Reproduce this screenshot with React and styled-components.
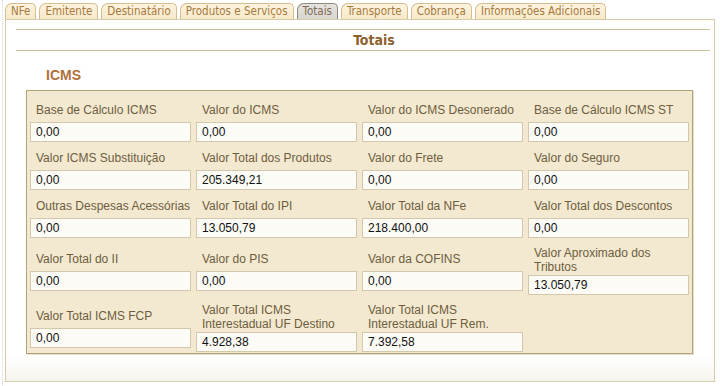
import styled, { createGlobalStyle } from "styled-components";

const Global = createGlobalStyle`
  html, body {
    margin: 0;
    padding: 0;
    background: #ffffff;
  }
`;

const Page = styled.div`
  width: 719px;
  height: 386px;
  padding: 3px 0 0 2px;
  box-sizing: border-box;
  border-left: 1px dotted #d6d6d6;
  margin-left: 2px;
`;

const TabStrip = styled.div`
  display: flex;
  gap: 3px;
  height: 16px;
  position: relative;
  z-index: 1;
`;

const Tab = styled.div`
  height: 16px;
  box-sizing: border-box;
  padding: 0 5px;
  font-family: "DejaVu Sans Condensed", "DejaVu Sans", sans-serif;
  font-size: 11.5px;
  line-height: 15px;
  color: ${(p) => (p.$active ? "#7d6c58" : "#a87a3e")};
  background: ${(p) => (p.$active ? "linear-gradient(#e6e3dd, #d9d6cf)" : "linear-gradient(#fdf4e0, #f7e8c8)")};
  border: 1px solid ${(p) => (p.$active ? "#8e8a80" : "#d9bd8c")};
  border-bottom: none;
  border-radius: 7px 5px 0 0;
  white-space: nowrap;
`;

const Panel = styled.div`
  width: 710px;
  height: 363px;
  box-sizing: border-box;
  border: 1px solid #d6ccab;
  background: linear-gradient(#ffffff 0, #ffffff 335px, #f6f4ee 362px);
  padding-top: 9px;
`;

const Header = styled.div`
  margin: 0 4px 0 10px;
  height: 22px;
  border-top: 1px solid #cdbf99;
  border-bottom: 1px solid #cdbf99;
  box-sizing: border-box;
  display: flex;
  align-items: center;
  justify-content: center;
  padding-left: 22px;
  font-family: "DejaVu Sans Condensed", "DejaVu Sans", sans-serif;
  font-weight: bold;
  font-size: 14px;
  color: #8e5f2e;
`;

const SectionTitle = styled.div`
  margin: 16px 0 0 40px;
  height: 17px;
  line-height: 17px;
  font-family: "Liberation Sans", Arial, sans-serif;
  font-weight: bold;
  font-size: 14px;
  color: #b0713a;
`;

const Box = styled.div`
  margin: 6px 0 0 20px;
  width: 667px;
  box-sizing: border-box;
  background: #f3e9d1;
  border: 1px solid #b2a27c;
  box-shadow: 1px 1px 0 #e8dfc6;
  padding: 12px 2px 1px 3px;
  display: grid;
  grid-template-columns: repeat(4, 161px);
  column-gap: 5px;
  row-gap: 9px;
  align-items: center;
`;

const Cell = styled.div`
  display: flex;
  flex-direction: column;
`;

const Label = styled.div`
  padding-left: 6px;
  font-family: "Liberation Sans", Arial, sans-serif;
  font-size: 12px;
  line-height: ${(p) => (p.$wrap ? "13.5px" : "14px")};
  margin-bottom: ${(p) => (p.$wrap ? "1px" : "5px")};
  color: #6e5d3d;
  white-space: ${(p) => (p.$wrap ? "normal" : "nowrap")};
  padding-right: ${(p) => (p.$wrap ? "10px" : "0")};
`;

const Field = styled.div`
  height: 20px;
  box-sizing: border-box;
  border: 1px solid #d3c8aa;
  background: #fcfbf6;
  padding-left: 5px;
  font-family: "Liberation Sans", Arial, sans-serif;
  font-size: 12px;
  line-height: 18px;
  color: #111;
`;

const tabs = [
  "NFe",
  "Emitente",
  "Destinatário",
  "Produtos e Serviços",
  "Totais",
  "Transporte",
  "Cobrança",
  "Informações Adicionais",
];

const fields = [
  ["Base de Cálculo ICMS", "0,00"],
  ["Valor do ICMS", "0,00"],
  ["Valor do ICMS Desonerado", "0,00"],
  ["Base de Cálculo ICMS ST", "0,00"],
  ["Valor ICMS Substituição", "0,00"],
  ["Valor Total dos Produtos", "205.349,21"],
  ["Valor do Frete", "0,00"],
  ["Valor do Seguro", "0,00"],
  ["Outras Despesas Acessórias", "0,00"],
  ["Valor Total do IPI", "13.050,79"],
  ["Valor Total da NFe", "218.400,00"],
  ["Valor Total dos Descontos", "0,00"],
  ["Valor Total do II", "0,00"],
  ["Valor do PIS", "0,00"],
  ["Valor da COFINS", "0,00"],
  ["Valor Aproximado dos Tributos", "13.050,79", true],
  ["Valor Total ICMS FCP", "0,00"],
  ["Valor Total ICMS Interestadual UF Destino", "4.928,38", true],
  ["Valor Total ICMS Interestadual UF Rem.", "7.392,58", true],
];

export default function App() {
  return (
    <Page>
      <Global />
      <TabStrip>
        {tabs.map((t) => (
          <Tab key={t} $active={t === "Totais"}>{t}</Tab>
        ))}
      </TabStrip>
      <Panel>
        <Header>Totais</Header>
        <SectionTitle>ICMS</SectionTitle>
        <Box>
          {fields.map(([label, value, wrap]) => (
            <Cell key={label}>
              <Label $wrap={wrap}>{label}</Label>
              <Field>{value}</Field>
            </Cell>
          ))}
        </Box>
      </Panel>
    </Page>
  );
}
